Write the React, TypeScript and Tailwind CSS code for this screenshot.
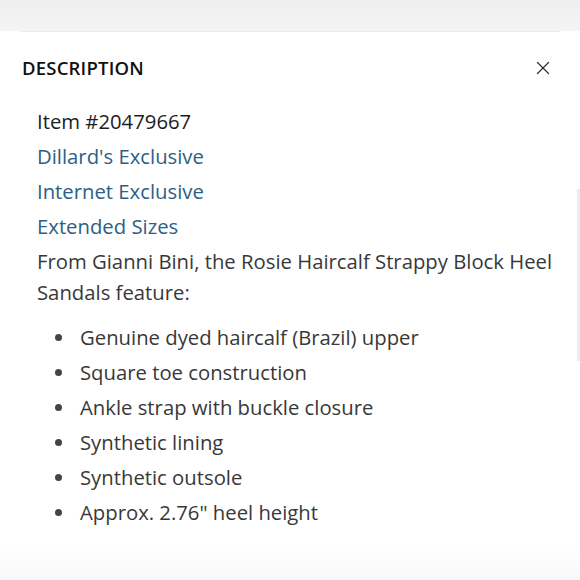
import { X } from 'lucide-react';

const features = [
  'Genuine dyed haircalf (Brazil) upper',
  'Square toe construction',
  'Ankle strap with buckle closure',
  'Synthetic lining',
  'Synthetic outsole',
  'Approx. 2.76" heel height',
];

const badges = ["Dillard's Exclusive", 'Internet Exclusive', 'Extended Sizes'];

export default function App() {
  return (
    <div
      className="relative w-[580px] h-[580px] overflow-hidden bg-white"
      style={{ fontFamily: '"Open Sans", "Liberation Sans", sans-serif' }}
    >
      {/* faded page behind the sheet */}
      <div className="h-[31px] bg-gradient-to-b from-[#efefef] to-[#f4f4f4]" />
      <div className="mx-5 h-px bg-[#ececec]" />

      {/* Header */}
      <div className="flex items-center justify-between pl-[22px] pr-[26px] pt-[22px]">
        <h2 className="text-[18.5px] font-semibold tracking-[0.2px] text-[#111]">DESCRIPTION</h2>
        <X className="w-[22px] h-[22px] text-[#333]" strokeWidth={1.3} />
      </div>

      {/* Body */}
      <div className="pl-[37px] pr-[20px] pt-[22px] text-[20.3px] leading-[35px] text-[#383838]">
        <p className="text-[#1d1d1d]">Item #20479667</p>
        {badges.map((b) => (
          <p key={b} className="text-[#2c6085]">
            {b}
          </p>
        ))}
        <p className="leading-[31px] pt-[2px]">
          From Gianni Bini, the Rosie Haircalf Strappy Block Heel Sandals feature:
        </p>
        <ul className="mt-[12px]">
          {features.map((f) => (
            <li key={f} className="flex items-center">
              <span className="w-[43px] shrink-0 pl-[18px]">
                <span className="block w-[7px] h-[7px] rounded-full bg-[#444]" />
              </span>
              <span>{f}</span>
            </li>
          ))}
        </ul>
      </div>

      {/* scrollbar */}
      <div className="absolute right-0 top-[189px] w-[3px] h-[172px] bg-[#ececec]" />

      {/* bottom fade */}
      <div className="absolute left-0 right-0 bottom-0 h-[32px] bg-gradient-to-b from-white to-[#f8f8f8]" />
    </div>
  );
}
